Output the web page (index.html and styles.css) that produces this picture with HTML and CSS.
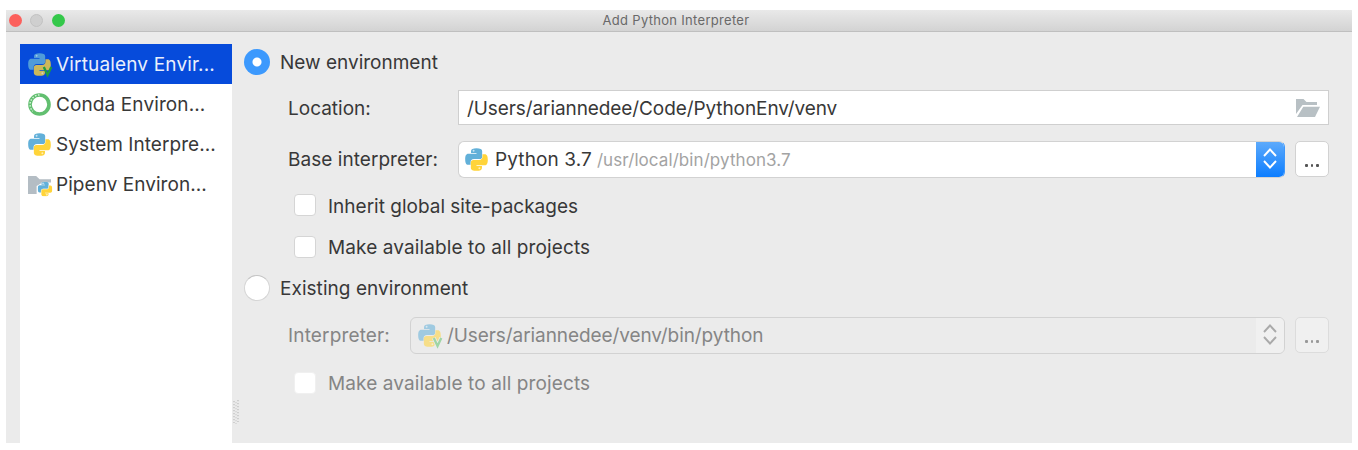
FILE: index.html
```html
<!DOCTYPE html>
<html lang="en">
<head>
<meta charset="utf-8">
<title>Add Python Interpreter</title>
<link rel="stylesheet" href="styles.css">
</head>
<body>
<svg width="0" height="0" class="defs" aria-hidden="true">
  <symbol id="snake" viewBox="0 0 24 24">
    <path class="snake-blue" d="M6.300 3.200C6.300 1 8.300.2 12 .2s5.900.8 5.900 3V9c0 1.600-1 2.600-2.700 2.600H9.400C7 11.600 5.800 13 5.800 15v2.600H3.300C1 17.600.2 15.200.2 11.800S1 6 3.500 6H12v-.8H6.300z"/>
    <path class="snake-yellow" transform="rotate(180 12 12)" d="M6.300 3.200C6.300 1 8.300.2 12 .2s5.900.8 5.900 3V9c0 1.600-1 2.600-2.700 2.600H9.400C7 11.600 5.800 13 5.800 15v2.600H3.300C1 17.600.2 15.200.2 11.800S1 6 3.500 6H12v-.8H6.300z"/>
    <circle class="snake-eye" cx="9" cy="2.900" r="1"/>
    <circle class="snake-eye" cx="15" cy="21.100" r="1"/>
  </symbol>
  <symbol id="arrows" viewBox="0 0 14 21">
    <path d="M1 8l6-6.500L13 8M1 13l6 6.500L13 13" fill="none" stroke="currentColor" stroke-width="1.900"/>
  </symbol>
</svg>
<div class="window">
  <header class="titlebar">
    <i class="light red"></i><i class="light gray"></i><i class="light green"></i>
    <h1 class="title">Add Python Interpreter</h1>
  </header>
  <div class="content">
    <nav class="sidebar">
      <div class="item selected">
        <svg class="icon dim" viewBox="0 0 24 24"><use href="#snake"/><path class="vmark" d="M16.500 14.500l3.900 8.500 3.900-8.500"/></svg>
        <span class="t-virtual">Virtualenv Envir...</span>
      </div>
      <div class="item">
        <svg class="icon" viewBox="0 0 24 24"><circle cx="12" cy="12" r="9.900" fill="none" stroke="#62bf70" stroke-width="3.800"/><path d="M12 2A10 10 0 0 0 5 19" fill="none" stroke="#d9f0dc" stroke-width="1.500" stroke-dasharray="1.600 1.600"/></svg>
        <span class="t-conda">Conda Environ...</span>
      </div>
      <div class="item">
        <svg class="icon" viewBox="0 0 24 24"><use href="#snake"/></svg>
        <span class="t-system">System Interpre...</span>
      </div>
      <div class="item">
        <svg class="icon" viewBox="0 0 24 24"><path fill="#b4bdc4" d="M0 3h8.500l3.600 3.500h11.900V10h-9L9 13.500v8.500H0z"/><use class="halo" href="#snake" x="10" y="9" width="15.500" height="15.500"/></svg>
        <span class="t-pipenv">Pipenv Environ...</span>
      </div>
    </nav>
    <svg class="grip" width="6" height="24" viewBox="0 0 6 24"><path d="M1 1v22M5 0v22" stroke="#bcbcbc" stroke-width="1.200" stroke-dasharray="1.300 1.700"/><path d="M3 2v22" stroke="#c8c8c8" stroke-width="1" stroke-dasharray="1.300 1.700"/></svg>
    <main class="form">
      <div class="row radio-row first"><i class="radio on"></i><span class="t-new">New environment</span></div>
      <div class="row location">
        <label class="label"><span class="t-location">Location:</span></label>
        <div class="field"><span class="t-path">/Users/ariannedee/Code/PythonEnv/venv</span>
          <svg class="folder" width="24" height="18" viewBox="0 0 24 18"><path fill="#b8c0c4" d="M0 0h7.500l3 3h10.500v3H6.500L0 15zM7.300 7.800H24L19 18H1z"/></svg>
        </div>
      </div>
      <div class="row base">
        <label class="label"><span class="t-base">Base interpreter:</span></label>
        <div class="combo">
          <svg class="icon" viewBox="0 0 24 24"><use href="#snake"/></svg>
          <span class="t-python">Python 3.7</span><span class="t-usr">/usr/local/bin/python3.7</span>
          <span class="stepper"><svg width="14" height="21"><use href="#arrows"/></svg></span>
        </div>
        <div class="more"><i></i><i></i><i></i></div>
      </div>
      <div class="row check-row inherit"><i class="check"></i><span class="t-inherit">Inherit global site-packages</span></div>
      <div class="row check-row"><i class="check"></i><span class="t-make">Make available to all projects</span></div>
      <div class="row radio-row"><i class="radio"></i><span class="t-existing">Existing environment</span></div>
      <div class="row existing disabled">
        <label class="label"><span class="t-interp">Interpreter:</span></label>
        <div class="combo">
          <svg class="icon" viewBox="0 0 24 24"><use href="#snake"/><path class="vedge" d="M16.500 14.500l3.900 8.500 3.900-8.500"/><path class="vmark" d="M16.500 14.500l3.900 8.500 3.900-8.500"/></svg>
          <span class="t-venv">/Users/ariannedee/venv/bin/python</span>
          <span class="stepper"><svg width="14" height="21"><use href="#arrows"/></svg></span>
        </div>
        <div class="more"><i></i><i></i><i></i></div>
      </div>
      <div class="row check-row last disabled"><i class="check"></i><span class="t-make">Make available to all projects</span></div>
    </main>
  </div>
</div>
</body>
</html>
```
FILE: styles.css
```css
* { box-sizing: border-box; }
body { margin: 0; padding: 10px 6px 0; background: #fff; color: #383838; font: 19px/24px Inter, "Liberation Sans", sans-serif; letter-spacing: .05px; white-space: nowrap; overflow: hidden; }
.defs { display: block; height: 0; }
.window { width: 1346px; height: 433px; background: #ebebeb; display: flex; flex-direction: column; overflow: hidden; }
.titlebar { height: 22px; flex: none; display: grid; grid-template-columns: 21px 21.500px 21px 1207px; align-items: center; padding-left: 3px; background: linear-gradient(#e9e9e9, #d3d3d3); border-bottom: 1px solid #bfbfbf; }
.light { width: 13px; height: 13px; border-radius: 50%; margin-top: -1px; }
.red { background: #fc605c; }
.gray { background: #cfcfcf; border: 1px solid #c2c2c2; }
.green { background: #34c84a; }
.title { margin: 0; text-align: center; font-size: 13px; line-height: 19px; padding-bottom: 1px; font-weight: 400; color: #696969; letter-spacing: .3px; }
.content { flex: 1; display: flex; padding: 12px 0 0 14px; }
.sidebar { width: 212px; background: #fff; flex: none; }
.item { height: 40px; display: flex; align-items: center; gap: 5px; padding-left: 8px; }
.item span, .radio-row span, .label, .field span, .combo > span:not(.stepper), .check-row span { padding-top: 2px; }
.selected { background: #064bdb; color: #e9effc; }
.icon { width: 23px; height: 23px; flex: none; overflow: visible; }
.snake-blue { fill: #62b0d9; }
.snake-yellow { fill: #ffd43a; }
.snake-eye { fill: #fff; opacity: .65; }
.dim { --v: #1d9a42; }
.dim use { opacity: .8; }
.vmark { fill: none; stroke: var(--v, #62c46c); stroke-width: 2.400; }
.vedge { fill: none; stroke: #ebebeb; stroke-width: 4; }
.halo { stroke: #fff; stroke-width: 1px; paint-order: stroke; }
.grip { flex: none; align-self: flex-end; margin: 0 0 19px 1px; }
.form { flex: 1; display: flex; flex-direction: column; padding-left: 5px; }
.row { display: flex; align-items: center; flex: none; padding-right: 24px; }
.radio-row { height: 41px; gap: 10px; }
.radio-row.first { height: 36px; }
.radio { width: 26px; height: 26px; border-radius: 50%; background: #fff; border: 1px solid #d5d5d5; border-top-color: #c4c4c4; flex: none; }
.radio.on { background: radial-gradient(circle, #fff 0 4px, #3c99fd 5px); border: 0; }
.location { height: 55px; }
.label { width: 214px; padding-left: 44px; flex: none; }
.field { width: 871px; height: 35px; background: #fff; border: 1px solid #cfcfcf; display: flex; align-items: center; padding: 0 8px; }
.folder { margin-left: auto; }
.base { height: 48px; }
.combo { width: 827px; height: 37px; background: #fff; border: 1px solid #d2d2d2; border-radius: 6px; display: flex; align-items: center; padding-left: 6px; overflow: hidden; }
.base .combo { border-right-color: #3c97fc; }
.combo .icon { margin-right: 7px; }
.t-usr { font-size: 17px; color: #a3a3a3; margin-left: 5px; }
.stepper { width: 29px; height: 37px; margin-left: auto; margin-right: -1px; background: linear-gradient(#5fabfb, #0a7cff); color: #fff; display: flex; align-items: center; padding: 0 0 2px 7px; flex: none; }
.more { width: 34px; height: 36px; margin-left: 10px; border: 1px solid #d2d2d2; border-radius: 5px; background: #fff; display: flex; justify-content: center; gap: 3px; padding-top: 22px; flex: none; }
.more i { width: 2.500px; height: 2.500px; background: #555; border-radius: 1px; }
.check-row { height: 41px; padding-left: 50px; gap: 12px; }
.check-row.inherit { height: 42px; margin-top: 1px; }
.inherit span { position: relative; top: .5px; }
.check { width: 22px; height: 22px; background: #fff; border: 1px solid #d5d5d5; border-radius: 4px; flex: none; }
.existing { height: 54px; }
.existing .label { width: 166px; }
.existing .combo { width: 875px; padding-left: 7px; background: #ebebeb; }
.existing .icon { opacity: .55; margin-right: 6px; }
.disabled { color: #858585; }
.disabled .stepper { background: #f0f0f0; color: #aaa; }
.disabled .more { background: #f0f0f0; border-color: #dcdcdc; }
.disabled .more i { background: #999; }
.disabled .check { border-color: #f0f0f0; }
.t-virtual { letter-spacing: .16px; }
.t-conda, .t-make, .t-python { letter-spacing: .11px; }
.t-new, .t-location, .t-inherit { letter-spacing: 0; }
.t-usr { letter-spacing: .08px; }
.t-path { letter-spacing: -.09px; }
.t-interp { letter-spacing: .15px; }
.t-venv { letter-spacing: -.08px; }
```
